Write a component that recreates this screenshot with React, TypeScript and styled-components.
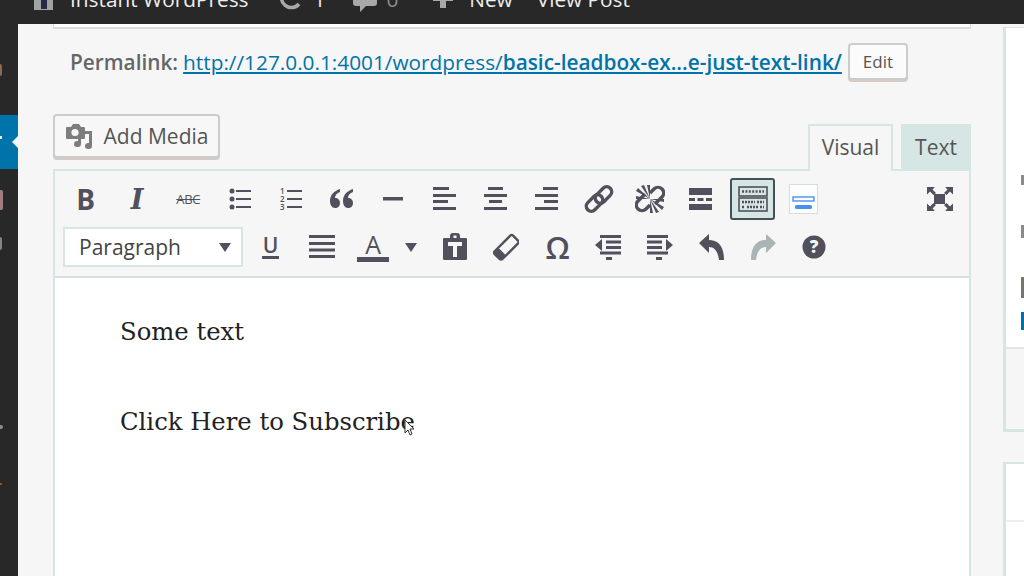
import React from "react";
import styled, { createGlobalStyle } from "styled-components";

const ink = "#51505c";
const line = "#d6e6e5";

const GlobalStyle = createGlobalStyle`
  html, body {
    margin: 0;
    padding: 0;
    background: #f6f6f6;
    overflow: hidden;
  }
  * {
    box-sizing: border-box;
  }
`;

const Page = styled.div`
  width: 1024px;
  height: 576px;
  overflow: hidden;
  display: flex;
  flex-direction: column;
  font-family: "Open Sans", sans-serif;
  background: #f6f6f6;
`;

const TopBar = styled.div`
  height: 24px;
  flex: none;
  background: #282828;
  overflow: hidden;
  color: #eeeeee;
  font-size: 20.8px;
  display: flex;
  align-items: flex-start;
  padding-left: 34px;
`;

const BarItem = styled.div<{ $gap?: number; $left?: number; $dim?: boolean }>`
  display: flex;
  align-items: center;
  height: 24px;
  margin-top: -13px;
  line-height: 24px;
  gap: ${(p) => p.$gap ?? 12}px;
  margin-left: ${(p) => p.$left ?? 0}px;
  white-space: nowrap;
  color: ${(p) => (p.$dim ? "#8d8d8d" : "#eeeeee")};
  svg {
    flex: none;
  }
`;

const Body = styled.div`
  flex: 1;
  min-height: 0;
  display: flex;
`;

const AdminMenu = styled.div`
  width: 18px;
  flex: none;
  background: #282828;
  display: flex;
  flex-direction: column;
`;

const MenuMark = styled.div<{ $top: number; $h: number; $w?: number; $color: string }>`
  margin-top: ${(p) => p.$top}px;
  height: ${(p) => p.$h}px;
  width: ${(p) => p.$w ?? 3}px;
  background: ${(p) => p.$color};
  border-radius: 0 2px 2px 0;
  flex: none;
`;

const ActiveItem = styled.div`
  margin-top: 39px;
  height: 54px;
  flex: none;
  background: #0073aa;
  position: relative;
  &::before {
    content: "";
    position: absolute;
    left: 0;
    top: 21px;
    width: 2px;
    height: 3px;
    background: #e8f2f6;
  }
  &::after {
    content: "";
    position: absolute;
    right: 0;
    top: 21px;
    border: 6px solid transparent;
    border-right-color: #f6f6f6;
    border-left-width: 0;
  }
`;

const Content = styled.div`
  flex: 1;
  min-width: 0;
  display: flex;
  padding-left: 35px;
  gap: 32px;
`;

const EditorColumn = styled.div`
  width: 918px;
  flex: none;
  display: flex;
  flex-direction: column;
`;

const TitleEdge = styled.div`
  height: 5px;
  flex: none;
  width: 918px;
  background: #ffffff;
  border: 1px solid #d5dde2;
  border-width: 0 1px 2px 1px;
`;

const PermalinkRow = styled.div`
  display: flex;
  align-items: center;
  height: 38px;
  margin-top: 14px;
  padding-left: 17px;
  font-size: 20.8px;
  color: #666666;
  white-space: nowrap;
`;

const PermalinkLabel = styled.strong`
  font-weight: 600;
  margin-right: 5px;
`;

const PermalinkUrl = styled.a`
  color: #0073aa;
  text-decoration: underline;
  b {
    font-weight: 600;
  }
`;

const WpButton = styled.button`
  display: flex;
  align-items: center;
  justify-content: center;
  font-family: inherit;
  color: #555555;
  background: #f7f7f7;
  border: 2px solid #cccccc;
  border-radius: 4px;
  box-shadow: 0 2px 0 #d3cbc4;
  padding: 0;
`;

const EditButton = styled(WpButton)`
  width: 60px;
  height: 37px;
  font-size: 17px;
  margin-left: 6px;
  align-self: flex-start;
  background: #fbfbfb;
`;

const EditorHead = styled.div`
  display: flex;
  justify-content: space-between;
  margin-top: 33px;
  height: 55px;
  flex: none;
  position: relative;
  z-index: 1;
`;

const AddMediaButton = styled(WpButton)`
  width: 167px;
  height: 44px;
  font-size: 21px;
  gap: 11px;
`;

const Tabs = styled.div`
  display: flex;
  align-items: flex-end;
  gap: 8px;
`;

const Tab = styled.div<{ $active?: boolean }>`
  height: ${(p) => (p.$active ? 47 : 45)}px;
  margin-bottom: ${(p) => (p.$active ? -2 : 0)}px;
  padding: ${(p) => (p.$active ? "0 0 4px" : "0 0 2px")};
  width: ${(p) => (p.$active ? 85 : 70)}px;
  display: flex;
  align-items: center;
  justify-content: center;
  font-size: 21px;
  color: #555555;
  background: ${(p) => (p.$active ? "#f6f6f6" : line)};
  border: 2px solid ${line};
  border-bottom: none;
`;

const Editor = styled.div`
  flex: 1;
  display: flex;
  flex-direction: column;
  border: 2px solid ${line};
  border-bottom: none;
  min-height: 0;
`;

const Toolbar = styled.div`
  height: 107px;
  flex: none;
  padding: 5px 0 0 5px;
  background: #f6f6f6;
  border-bottom: 2px solid #d5dfe0;
  display: flex;
  flex-direction: column;
  gap: 2px;
`;

const ToolRow = styled.div`
  display: flex;
  align-items: center;
  height: 46px;
`;

const RowSpacer = styled.div`
  flex: 1;
`;

const Tool = styled.div<{ $w?: number }>`
  width: ${(p) => p.$w ?? 51.3}px;
  height: 46px;
  flex: none;
  display: flex;
  align-items: center;
  justify-content: center;
  color: ${ink};
`;

const GlyphTool = styled(Tool)<{ $size: number; $weight?: number; $serif?: boolean; $italic?: boolean }>`
  font-size: ${(p) => p.$size}px;
  font-weight: ${(p) => p.$weight ?? 700};
  font-style: ${(p) => (p.$italic ? "italic" : "normal")};
  font-family: ${(p) => (p.$serif ? '"DejaVu Serif", serif' : '"Open Sans", sans-serif')};
`;

const Strike = styled.span`
  font-size: 13px;
  font-weight: 400;
  letter-spacing: -0.3px;
  text-decoration: line-through;
`;

const Under = styled.span`
  display: inline-block;
  line-height: 20px;
  height: 24px;
  padding: 0 1px;
  border-bottom: 3px solid ${ink};
`;

const TextColorA = styled.span`
  display: inline-block;
  width: 32px;
  height: 30px;
  line-height: 25px;
  text-align: center;
  font-weight: 400;
  font-size: 25px;
  border-bottom: 5px solid ${ink};
`;

const ActiveBox = styled.div`
  width: 45px;
  height: 42px;
  display: flex;
  align-items: center;
  justify-content: center;
  background: ${line};
  border: 2px solid #44505a;
  border-radius: 3px;
`;

const FormatSelect = styled.div`
  width: 180px;
  height: 40px;
  margin: 0 2px 0 3px;
  flex: none;
  background: #ffffff;
  border: 2px solid ${line};
  display: flex;
  align-items: center;
  justify-content: space-between;
  padding: 0 10px 0 14px;
  font-size: 21px;
  color: #444444;
`;

const Caret = styled.span`
  border: 6.5px solid transparent;
  border-top: 9px solid ${ink};
  border-bottom: none;
`;

const CaretTool = styled(Tool)`
  margin-left: -7px;
`;

const EditorBody = styled.div`
  flex: 1;
  background: #ffffff;
  padding: 31px 0 0 65px;
  font-family: "DejaVu Serif", serif;
  font-size: 24.3px;
  color: #222222;
  position: relative;
`;

const EditorLine = styled.p`
  margin: 0 0 45px;
  line-height: 45px;
  white-space: nowrap;
`;

const MouseCursor = styled.svg`
  position: absolute;
  left: 349px;
  top: 141px;
`;

const SideColumn = styled.div`
  flex: 1;
  min-width: 0;
  display: flex;
  flex-direction: column;
`;

const SideBox = styled.div`
  flex: none;
  margin-top: 3px;
  height: 405px;
  background: #ffffff;
  border: solid ${line};
  border-width: 1px 0 3px 3px;
  display: flex;
  flex-direction: column;
`;

const SideInner = styled.div`
  flex: 1;
  padding-left: 15px;
  display: flex;
  flex-direction: column;
  align-items: flex-start;
`;

const SideFoot = styled.div`
  height: 82px;
  flex: none;
  background: #f6f6f6;
  border-top: 2px solid #dfe7e7;
`;

const SideMark = styled.div<{ $top: number; $h: number; $color: string }>`
  margin-top: ${(p) => p.$top}px;
  height: ${(p) => p.$h}px;
  width: 3px;
  background: ${(p) => p.$color};
  flex: none;
`;

const SideBoxLow = styled.div`
  flex: 1;
  margin-top: 30px;
  background: #ffffff;
  border: solid ${line};
  border-width: 2px 0 0 3px;
`;

const SideRule = styled.div`
  height: 2px;
  margin-top: 56px;
  background: #e8efef;
`;

const Bars = ({ rows }: { rows: [number, number, number][] }) => (
  <svg width="28" height="26" viewBox="0 0 28 26" fill={ink}>
    {rows.map(([x, y, w], i) => (
      <rect key={i} x={x} y={y} width={w} height={3} />
    ))}
  </svg>
);

const LinkIcon = () => (
  <svg width="30" height="30" viewBox="0 0 30 30" fill="none" stroke={ink} strokeWidth="3.4">
    <rect x="14.5" y="1.5" width="10" height="19" rx="5" transform="rotate(45 19.5 11)" />
    <rect x="5.5" y="9.5" width="10" height="19" rx="5" transform="rotate(45 10.5 19)" />
  </svg>
);

const UnlinkIcon = () => (
  <svg width="30" height="30" viewBox="0 0 30 30">
    <g fill="none" stroke={ink} strokeWidth="3.4">
      <path d="M15 9l4-4a5.5 5.5 0 0 1 8 8l-7 7" />
      <path d="M15 21l-4 4a5.5 5.5 0 0 1-8-8l7-7" />
    </g>
    <g fill={ink}>
      <path d="M15 15L1 7l2-3z" />
      <path d="M15 15L6 2l3-1z" />
      <path d="M15 15L12 1l3 0z" />
      <path d="M15 15L1 12l0 3z" />
      <path d="M15 15l14 8-2 3z" />
      <path d="M15 15l9 13-3 1z" />
      <path d="M15 15l3 14-3 0z" />
      <path d="M15 15l14 3 0-3z" />
    </g>
  </svg>
);

const MoreIcon = () => (
  <svg width="24" height="24" viewBox="0 0 24 24" fill={ink}>
    <rect x="0" y="1" width="23" height="7" />
    <rect x="0" y="11" width="6" height="3" />
    <rect x="8.5" y="11" width="6" height="3" />
    <rect x="17" y="11" width="6" height="3" />
    <rect x="0" y="17" width="23" height="6" />
  </svg>
);

const KitchenSinkIcon = () => (
  <svg width="30" height="26" viewBox="0 0 30 26" fill="none" stroke={ink}>
    <rect x="1" y="1" width="28" height="9" strokeWidth="1.6" />
    <rect x="1" y="12" width="28" height="13" strokeWidth="1.6" />
    <path d="M4 5.5h22" strokeWidth="2.6" strokeDasharray="2 1.4" />
    <path d="M4 16h13M19 16h7M4 21h3M9 21h11M22 21h4" strokeWidth="2.6" strokeDasharray="2 1" />
  </svg>
);

const BlockIcon = () => (
  <svg width="29" height="30" viewBox="0 0 29 30">
    <rect x="0.5" y="0.5" width="28" height="29" fill="#fdfefe" stroke="#d5dce2" />
    <rect x="4" y="13" width="21" height="4" fill="#fff" stroke="#4a90f0" strokeWidth="1.4" />
    <rect x="6" y="21" width="17" height="4" rx="1.5" fill="#4a90f0" />
  </svg>
);

const FullscreenIcon = () => (
  <svg width="28" height="26" viewBox="0 0 28 26" fill={ink}>
    <rect x="8" y="8" width="11" height="10" />
    <path d="M1 1h8L6.5 3.5 10 7 7.5 9 4 5.5 1 8.5z" />
    <path d="M27 1h-8l2.5 2.5L18 7l2.5 2L24 5.5l3 3z" />
    <path d="M1 25h8l-2.5-2.5L10 19l-2.5-2L4 20.5 1 17.5z" />
    <path d="M27 25h-8l2.5-2.5L18 19l2.5-2 3.5 3.5 3-3z" />
  </svg>
);

const PasteIcon = () => (
  <svg width="28" height="28" viewBox="0 0 28 28" fill={ink}>
    <path d="M3 5h6V3a3 3 0 0 1 3-3h4a3 3 0 0 1 3 3v2h6a1.5 1.5 0 0 1 1 1v20a1.5 1.5 0 0 1-1 1H3a1.5 1.5 0 0 1-1-1V6a1.5 1.5 0 0 1 1-1z" />
    <rect x="12.5" y="2.5" width="3" height="2.5" fill="#f6f6f6" />
    <path d="M7 9h14v4h-5v11h-4V13H7z" fill="#f6f6f6" />
  </svg>
);

const EraserIcon = () => (
  <svg width="26" height="28" viewBox="0 0 26 28">
    <g transform="rotate(-45 13 14)">
      <rect x="0" y="9" width="26" height="11" rx="2" fill="#f6f6f6" stroke={ink} strokeWidth="2.4" />
      <rect x="0" y="9" width="7" height="11" rx="2" fill={ink} />
    </g>
  </svg>
);

const OutdentIcon = () => (
  <svg width="28" height="26" viewBox="0 0 28 26" fill={ink}>
    <rect x="5" y="1" width="21" height="3" />
    <rect x="11" y="6.5" width="15" height="3" />
    <rect x="11" y="12" width="15" height="3" />
    <rect x="5" y="17.5" width="21" height="3" />
    <rect x="11" y="23" width="6" height="3" />
    <path d="M0 11l7-6v12z" />
  </svg>
);

const IndentIcon = () => (
  <svg width="28" height="26" viewBox="0 0 28 26" fill={ink}>
    <rect x="1" y="1" width="21" height="3" />
    <rect x="1" y="6.5" width="15" height="3" />
    <rect x="1" y="12" width="15" height="3" />
    <rect x="1" y="17.5" width="21" height="3" />
    <rect x="10" y="23" width="6" height="3" />
    <path d="M27 11l-7-6v12z" />
  </svg>
);

const ArrowTurn = ({ color, flip }: { color: string; flip?: boolean }) => (
  <svg width="28" height="28" viewBox="0 0 28 28" fill={color} style={flip ? { transform: "scaleX(-1)" } : undefined}>
    <path d="M1 10L11 1v6c9 0 15 6 15 20h-5c-1-8-4-13-10-13v6z" />
  </svg>
);

const HelpIcon = () => (
  <svg width="24" height="24" viewBox="0 0 24 24">
    <circle cx="12" cy="12" r="11.5" fill={ink} />
    <text x="12" y="18" textAnchor="middle" fontFamily="Open Sans" fontWeight="800" fontSize="17" fill="#f6f6f6">
      ?
    </text>
  </svg>
);

const MediaIcon = () => (
  <svg width="28" height="27" viewBox="0 0 28 27" fill="#7d7d7d">
    <path d="M2 4h4l2-3h6l2 3h3a1.5 1.5 0 0 1 1 1v10a1.5 1.5 0 0 1-1 1H2a1.5 1.5 0 0 1-1-1V5a1.5 1.5 0 0 1 1-1z" />
    <circle cx="10" cy="9.5" r="3.6" fill="#f7f7f7" />
    <path d="M20 8h7v15a3.5 3 0 1 1-3-3V11h-4z" />
    <path d="M16 14v7a3.5 3 0 1 1-3-3v-4z" />
  </svg>
);

const LockIcon = () => (
  <svg width="19" height="24" viewBox="0 0 19 24" fill="#a2a2a2">
    <path d="M0 0h19v23H0z" />
    <rect x="7" y="10" width="6" height="12" fill="#282848" />
  </svg>
);

const RefreshIcon = () => (
  <svg width="24" height="24" viewBox="0 0 24 24" fill="none" stroke="#a8a8a8" strokeWidth="3.5">
    <path d="M21 3a10 10 0 1 0 1 14" />
    <path d="M24 12h-9l9-8z" fill="#a8a8a8" stroke="none" />
  </svg>
);

const CommentIcon = () => (
  <svg width="24" height="26" viewBox="0 0 24 26" fill="#a8a8a8">
    <path d="M3 0h18a3 3 0 0 1 3 3v14a3 3 0 0 1-3 3h-8l-6 6v-6H3a3 3 0 0 1-3-3V3a3 3 0 0 1 3-3z" />
  </svg>
);

const PlusIcon = () => (
  <svg width="20" height="24" viewBox="0 0 20 24" fill="#a8a8a8">
    <path d="M7 0h6v8h7v6h-7v7H7v-7H0V8h7z" />
  </svg>
);

const BulletIcon = () => (
  <svg width="26" height="26" viewBox="0 0 26 26" fill={ink}>
    <circle cx="5" cy="5" r="2.5" />
    <circle cx="5" cy="13" r="2.5" />
    <circle cx="5" cy="21" r="2.5" />
    <rect x="9" y="4" width="15" height="2" />
    <rect x="9" y="12" width="15" height="2" />
    <rect x="9" y="20" width="15" height="2" />
  </svg>
);

const NumberIcon = () => (
  <svg width="26" height="26" viewBox="0 0 26 26" fill={ink}>
    <g fontFamily="Open Sans" fontSize="8" fontWeight="600">
      <text x="2" y="8">1</text>
      <text x="2" y="16">2</text>
      <text x="2" y="24">3</text>
    </g>
    <rect x="9" y="4" width="15" height="2" />
    <rect x="9" y="12" width="15" height="2" />
    <rect x="9" y="20" width="15" height="2" />
  </svg>
);

const QuoteIcon = () => (
  <svg width="26" height="22" viewBox="0 0 26 22" fill={ink}>
    <path d="M11 1C5 3 1 7 1 13c0 4 2 7 5 7s5-2 5-5-2-5-5-5c0-3 2-5 5-6z" />
    <path d="M24 1c-6 2-10 6-10 12 0 4 2 7 5 7s5-2 5-5-2-5-5-5c0-3 2-5 5-6z" />
  </svg>
);

const DashIcon = () => (
  <svg width="22" height="6" viewBox="0 0 22 6" fill={ink}>
    <rect x="1" y="1" width="20" height="3.5" />
  </svg>
);

const App = () => {
  return (
    <Page>
      <GlobalStyle />
      <TopBar>
        <BarItem $gap={17}>
          <LockIcon />
          Instant WordPress
        </BarItem>
        <BarItem $left={29} $gap={12}>
          <RefreshIcon />1
        </BarItem>
        <BarItem $left={28} $gap={9} $dim>
          <CommentIcon />0
        </BarItem>
        <BarItem $left={35} $gap={16}>
          <PlusIcon />
          New
        </BarItem>
        <BarItem $left={24}>View Post</BarItem>
      </TopBar>
      <Body>
        <AdminMenu>
          <MenuMark $top={40} $h={12} $w={2} $color="#8a6a50" />
          <ActiveItem />
          <MenuMark $top={21} $h={20} $color="#a07d80" />
          <MenuMark $top={27} $h={13} $w={2} $color="#8c8078" />
          <MenuMark $top={175} $h={4} $color="#8c8c8c" />
          <MenuMark $top={54} $h={2} $w={2} $color="#a05a20" />
        </AdminMenu>
        <Content>
          <EditorColumn>
            <TitleEdge />
            <PermalinkRow>
              <PermalinkLabel>Permalink:</PermalinkLabel>
              <PermalinkUrl>
                http://127.0.0.1:4001/wordpress/<b>basic-leadbox-ex...e-just-text-link/</b>
              </PermalinkUrl>
              <EditButton>Edit</EditButton>
            </PermalinkRow>
            <EditorHead>
              <AddMediaButton>
                <MediaIcon />
                Add Media
              </AddMediaButton>
              <Tabs>
                <Tab $active>Visual</Tab>
                <Tab>Text</Tab>
              </Tabs>
            </EditorHead>
            <Editor>
              <Toolbar>
                <ToolRow>
                  <GlyphTool $size={28}>B</GlyphTool>
                  <GlyphTool $size={27} $serif $italic>I</GlyphTool>
                  <Tool><Strike>ABC</Strike></Tool>
                  <Tool><BulletIcon /></Tool>
                  <Tool><NumberIcon /></Tool>
                  <Tool><QuoteIcon /></Tool>
                  <Tool><DashIcon /></Tool>
                  <Tool><Bars rows={[[2, 1, 16], [2, 8, 23], [2, 14, 15], [2, 21, 23]]} /></Tool>
                  <Tool><Bars rows={[[6, 1, 15], [2, 8, 23], [7, 14, 13], [2, 21, 23]]} /></Tool>
                  <Tool><Bars rows={[[10, 1, 15], [2, 8, 23], [11, 14, 14], [2, 21, 23]]} /></Tool>
                  <Tool><LinkIcon /></Tool>
                  <Tool><UnlinkIcon /></Tool>
                  <Tool><MoreIcon /></Tool>
                  <Tool><ActiveBox><KitchenSinkIcon /></ActiveBox></Tool>
                  <Tool><BlockIcon /></Tool>
                  <RowSpacer />
                  <Tool><FullscreenIcon /></Tool>
                  <Tool $w={3.5} />
                </ToolRow>
                <ToolRow>
                  <FormatSelect>
                    Paragraph
                    <Caret />
                  </FormatSelect>
                  <GlyphTool $size={21} $weight={600}><Under>U</Under></GlyphTool>
                  <Tool><Bars rows={[[1, 1, 26], [1, 8, 26], [1, 14.5, 26], [1, 21, 26]]} /></Tool>
                  <GlyphTool $size={25}><TextColorA>A</TextColorA></GlyphTool>
                  <CaretTool $w={37.5}><Caret /></CaretTool>
                  <Tool><PasteIcon /></Tool>
                  <Tool><EraserIcon /></Tool>
                  <GlyphTool $size={31} $weight={600}>Ω</GlyphTool>
                  <Tool><OutdentIcon /></Tool>
                  <Tool><IndentIcon /></Tool>
                  <Tool><ArrowTurn color={ink} /></Tool>
                  <Tool><ArrowTurn color="#a9b5b5" flip /></Tool>
                  <Tool><HelpIcon /></Tool>
                </ToolRow>
              </Toolbar>
              <EditorBody>
                <EditorLine>Some text</EditorLine>
                <EditorLine>Click Here to Subscribe</EditorLine>
                <MouseCursor width="12" height="18" viewBox="0 0 12 18">
                  <path d="M1 1v13l3-3 2 5 2-1-2-5h4z" fill="#fff" stroke="#333" strokeWidth="1" />
                </MouseCursor>
              </EditorBody>
            </Editor>
          </EditorColumn>
          <SideColumn>
            <SideBox>
              <SideInner>
                <SideMark $top={147} $h={10} $color="#8a8a8a" />
                <SideMark $top={40} $h={13} $color="#8a8a8a" />
                <SideMark $top={39} $h={21} $color="#7d7368" />
                <SideMark $top={14} $h={18} $color="#0073aa" />
              </SideInner>
              <SideFoot />
            </SideBox>
            <SideBoxLow>
              <SideRule />
            </SideBoxLow>
          </SideColumn>
        </Content>
      </Body>
    </Page>
  );
};

export default App;
